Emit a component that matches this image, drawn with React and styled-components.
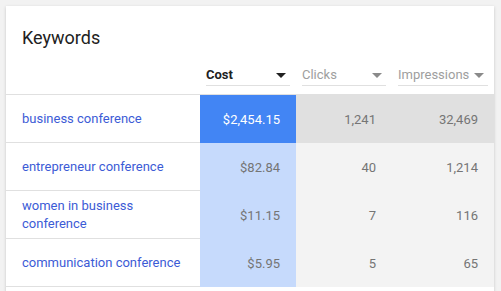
import React from "react";
import styled, { createGlobalStyle } from "styled-components";

const GlobalStyle = createGlobalStyle`
  body {
    margin: 0;
    background: #f2f2f2;
    font-family: Roboto, "Liberation Sans", Arial, sans-serif;
    overflow: hidden;
  }
`;

const Card = styled.div`
  margin: 6px;
  width: 488px;
  background: #fff;
  box-shadow: 0 1px 3px rgba(0, 0, 0, 0.18);
  padding-bottom: 40px;
`;

const Title = styled.h2`
  margin: 0;
  padding: 20px 16px 0;
  font-size: 18px;
  line-height: 24px;
  font-weight: 400;
  color: #212121;
`;

const Grid = styled.div`
  display: grid;
  grid-template-columns: 194px 96px 96px 102px;
`;

const HeadCell = styled.div`
  padding: 17px 6px 8px;
  border-bottom: 1px solid #e0e0e0;
`;

const Dropdown = styled.div`
  display: flex;
  align-items: center;
  justify-content: space-between;
  padding-bottom: 2px;
  border-bottom: 1px solid #e0e0e0;
  font-size: 13px;
  line-height: 16px;
  font-weight: ${(p) => (p.active ? 700 : 400)};
  color: ${(p) => (p.active ? "#212121" : "#9e9e9e")};
`;

const Arrow = styled.span`
  width: 0;
  height: 0;
  margin-right: 4px;
  border-left: 5px solid transparent;
  border-right: 5px solid transparent;
  border-top: 5px solid ${(p) => (p.active ? "#212121" : "#8a8a8a")};
`;

const KeywordCell = styled.div`
  height: 47px;
  display: flex;
  align-items: center;
  padding: 0 16px;
  border-bottom: 1px solid #e0e0e0;
  font-size: 13px;
  line-height: 18px;
  color: #3c5bd6;
`;

const NumCell = styled.div`
  height: 48px;
  display: flex;
  align-items: center;
  justify-content: flex-end;
  padding-right: 16px;
  font-size: 13px;
  color: ${(p) => (p.strong ? "#fff" : "#757575")};
  background: ${(p) => p.bg};
`;

const rows = [
  { kw: "business conference", cost: "$2,454.15", clicks: "1,241", imp: "32,469" },
  { kw: "entrepreneur conference", cost: "$82.84", clicks: "40", imp: "1,214" },
  { kw: "women in business conference", cost: "$11.15", clicks: "7", imp: "116" },
  { kw: "communication conference", cost: "$5.95", clicks: "5", imp: "65" },
];

export default function App() {
  return (
    <>
      <GlobalStyle />
      <Card>
        <Title>Keywords</Title>
        <Grid>
          <HeadCell />
          <HeadCell>
            <Dropdown active>
              Cost
              <Arrow active />
            </Dropdown>
          </HeadCell>
          <HeadCell>
            <Dropdown>
              Clicks
              <Arrow />
            </Dropdown>
          </HeadCell>
          <HeadCell>
            <Dropdown>
              Impressions
              <Arrow />
            </Dropdown>
          </HeadCell>
          {rows.map((r, i) => (
            <React.Fragment key={r.kw}>
              <KeywordCell>{r.kw}</KeywordCell>
              <NumCell strong={i === 0} bg={i === 0 ? "#4285f4" : "#c6dafc"}>
                {r.cost}
              </NumCell>
              <NumCell bg={i === 0 ? "#e0e0e0" : "#f3f3f3"}>{r.clicks}</NumCell>
              <NumCell bg={i === 0 ? "#e0e0e0" : "#f3f3f3"}>{r.imp}</NumCell>
            </React.Fragment>
          ))}
        </Grid>
      </Card>
    </>
  );
}
